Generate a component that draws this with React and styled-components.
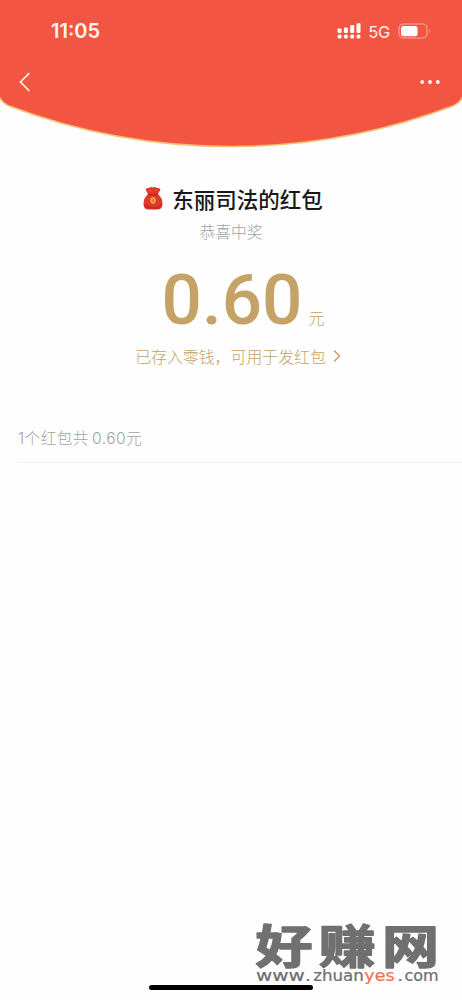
import React from "react";
import styled, { createGlobalStyle } from "styled-components";

const GlobalStyle = createGlobalStyle`
    * {
        box-sizing: border-box;
    }
    body {
        margin: 0;
        background: #fefefe;
        font-family: Inter, "Noto Sans CJK SC", sans-serif;
    }
`;

const Screen = styled.div`
    display: flex;
    flex-direction: column;
    width: 462px;
    height: 1000px;
    overflow: hidden;
    background: #fefefe;
`;

const Header = styled.header`
    display: grid;
    height: 150px;

    > * {
        grid-area: 1 / 1;
    }
`;

const Bars = styled.div`
    z-index: 1;
    color: #fff;
`;

const StatusBar = styled.div`
    display: flex;
    align-items: center;
    justify-content: space-between;
    height: 62px;
    padding: 0 30px 0 51px;
`;

const Time = styled.span`
    font-size: 20px;
    font-weight: 600;
    color: #fff5ee;
`;

const StatusIcons = styled.div`
    display: flex;
    align-items: center;
`;

const Network = styled.span`
    margin: 1px 8px 0 7px;
    font-size: 16.5px;
    letter-spacing: -0.3px;
    color: #fff0e8;
`;

const NavBar = styled.nav`
    display: flex;
    align-items: center;
    justify-content: space-between;
    height: 40px;
    padding: 0 22px 0 19px;
`;

const Main = styled.main`
    display: flex;
    flex-direction: column;
    align-items: center;
    flex: 1;
`;

const Sender = styled.h1`
    display: flex;
    align-items: center;
    gap: 8px;
    height: 32px;
    margin: 32px 0 0 3px;
    font-size: 21.5px;
    font-weight: 500;
    color: #191919;
`;

const Greeting = styled.p`
    height: 24px;
    margin: 7px 0 0;
    font-size: 15.8px;
    line-height: 24px;
    font-weight: 300;
    color: #a2a2a2;
`;

const Amount = styled.div`
    display: flex;
    align-items: baseline;
    height: 74px;
    margin: 18px 0 0 24px;
    color: #c5a266;
`;

const Digits = styled.span`
    font-family: Roboto, sans-serif;
    font-size: 71px;
    line-height: 74px;
    font-weight: 500;
`;

const Unit = styled.span`
    margin-left: 6px;
    font-size: 16px;
    line-height: 24px;
    font-weight: 300;
`;

const Deposit = styled.div`
    display: flex;
    align-items: center;
    gap: 7px;
    height: 24px;
    margin: 7px 0 0 14px;
    font-size: 15.9px;
    font-weight: 300;
    color: #c5a266;
`;

const Summary = styled.div`
    align-self: stretch;
    height: 37px;
    margin: 58px 0 0 17px;
    padding: 1px 0 0 1px;
    border-bottom: 1px solid #f0f0f0;
    font-size: 15.6px;
    line-height: 24px;
    font-weight: 300;
    letter-spacing: 0.45px;
    word-spacing: -1.5px;
    color: #a2a2a2;
`;

const Footer = styled.footer`
    display: grid;
    height: 100px;

    > * {
        grid-area: 1 / 1;
    }
`;

const SiteMark = styled.svg`
    justify-self: end;
    margin-right: 18px;
`;

const HomeIndicator = styled.div`
    align-self: end;
    justify-self: center;
    width: 164px;
    height: 5px;
    margin-bottom: 10px;
    border-radius: 3px;
    background: #000;
`;

const HeaderShape = () => (
    <svg width="462" height="150" viewBox="0 0 462 150">
        <path
            d="M-3 -3V90Q-1 101 8 105.500A627 627 0 0 0 454 105.500Q463 101 465 90V-3Z"
            fill="#f25542"
            stroke="#f8bd70"
            strokeWidth="1.700"
        />
    </svg>
);

const Signal = () => (
    <svg width="24" height="17" viewBox="0 0 24 17" fill="#fff">
        {[4.5, 5.5, 8, 9.8].map((height, i) => (
            <React.Fragment key={i}>
                <rect x={0.6 + i * 6.3} y={10 - height} width="4" height={height} rx="1.2" />
                <rect x={0.6 + i * 6.3} y="11.500" width="4" height="4" rx="1.5" />
            </React.Fragment>
        ))}
    </svg>
);

const Battery = () => (
    <svg width="34" height="17" viewBox="0 0 34 17">
        <rect x="1" y="1" width="28" height="14" rx="4.300" fill="none" stroke="#fba99b" strokeWidth="1.100" />
        <rect x="3" y="3" width="16.500" height="10.200" rx="2.500" fill="#fff" />
        <path d="M31 6q2 2.200 0 4.500z" fill="#fba99b" />
    </svg>
);

const MoneyBag = () => (
    <svg width="22" height="26" viewBox="0 0 22 26">
        <path
            d="M6 9L3.500 4.500Q4 2.500 7 3Q9 1.500 11 2.500Q13 1.500 15 3Q18 2.500 18.500 4.500L16 9Q20.500 13 20.500 19Q20.500 24.500 15 24.500H6.500Q1.500 24.500 1.500 19Q1.500 13 6 9Z"
            fill="#e0382a"
        />
        <path d="M2 19Q2 23.700 7 23.700H15Q20 23.500 20 18.500Q17 22 11 22Q6 22 2 19Z" fill="#c92a20" />
        <path d="M6 9Q11 10.500 16 9" fill="none" stroke="#b3241b" strokeWidth="1.200" />
        <path d="M8 4.500L9 6.500M14 4.500L13 6.500" stroke="#f36b50" strokeWidth=".800" />
        <ellipse cx="11" cy="15.500" rx="2.900" ry="3.400" fill="#e47a2c" />
        <ellipse cx="11" cy="15.500" rx="2" ry="2.600" fill="none" stroke="#f6c04d" strokeWidth="1" />
    </svg>
);

export default function App() {
    return (
        <Screen>
            <GlobalStyle />
            <Header>
                <HeaderShape />
                <Bars>
                    <StatusBar>
                        <Time>11:05</Time>
                        <StatusIcons>
                            <Signal />
                            <Network>5G</Network>
                            <Battery />
                        </StatusIcons>
                    </StatusBar>
                    <NavBar>
                        <svg width="12" height="20" viewBox="0 0 12 20">
                            <path d="M10.300 1.200L1.500 10L10.300 18.800" fill="none" stroke="#fff0dc" strokeWidth="1.700" />
                        </svg>
                        <svg width="20" height="6" viewBox="0 0 20 6" fill="#fff">
                            <circle cx="2.200" cy="3" r="1.900" />
                            <circle cx="10" cy="3" r="1.900" />
                            <circle cx="17.800" cy="3" r="1.900" />
                        </svg>
                    </NavBar>
                </Bars>
            </Header>
            <Main>
                <Sender>
                    <MoneyBag />
                    东丽司法的红包
                </Sender>
                <Greeting>恭喜中奖</Greeting>
                <Amount>
                    <Digits>0.60</Digits>
                    <Unit>元</Unit>
                </Amount>
                <Deposit>
                    已存入零钱，可用于发红包
                    <svg width="8" height="14" viewBox="0 0 8 14">
                        <path d="M1 1.500L6.500 7L1 12.500" fill="none" stroke="#c5a266" strokeWidth="1.500" />
                    </svg>
                </Deposit>
                <Summary>1个红包共 0.60元</Summary>
            </Main>
            <Footer>
                <SiteMark width="190" height="100" viewBox="0 0 190 100" fill="#707070">
                    <g transform="translate(1.500 62.500) scale(1.240 1)">
                        <text
                            fontFamily="Noto Sans CJK SC, sans-serif"
                            fontSize="46"
                            fontWeight="700"
                            letterSpacing="5"
                            stroke="#707070"
                            strokeWidth="1.500"
                            strokeLinejoin="round"
                        >
                            好赚网
                        </text>
                    </g>
                    <g transform="translate(0 80.500) scale(1.220 1)">
                        <text
                            fontFamily="DejaVu Sans, sans-serif"
                            fontSize="15.500"
                            stroke="#707070"
                            strokeWidth=".250"
                        >
                            <tspan x="1.600" textLength="40" lengthAdjust="spacingAndGlyphs">www</tspan>
                            <tspan x="41.800">.</tspan>
                            <tspan x="48.500" textLength="41.500" lengthAdjust="spacingAndGlyphs">zhuan</tspan>
                            <tspan x="90.400" textLength="25" lengthAdjust="spacingAndGlyphs" fill="#f47350" stroke="#f47350">yes</tspan>
                            <tspan x="117.500">.</tspan>
                            <tspan x="123.300" textLength="28" lengthAdjust="spacingAndGlyphs">com</tspan>
                        </text>
                    </g>
                </SiteMark>
                <HomeIndicator />
            </Footer>
        </Screen>
    );
}
